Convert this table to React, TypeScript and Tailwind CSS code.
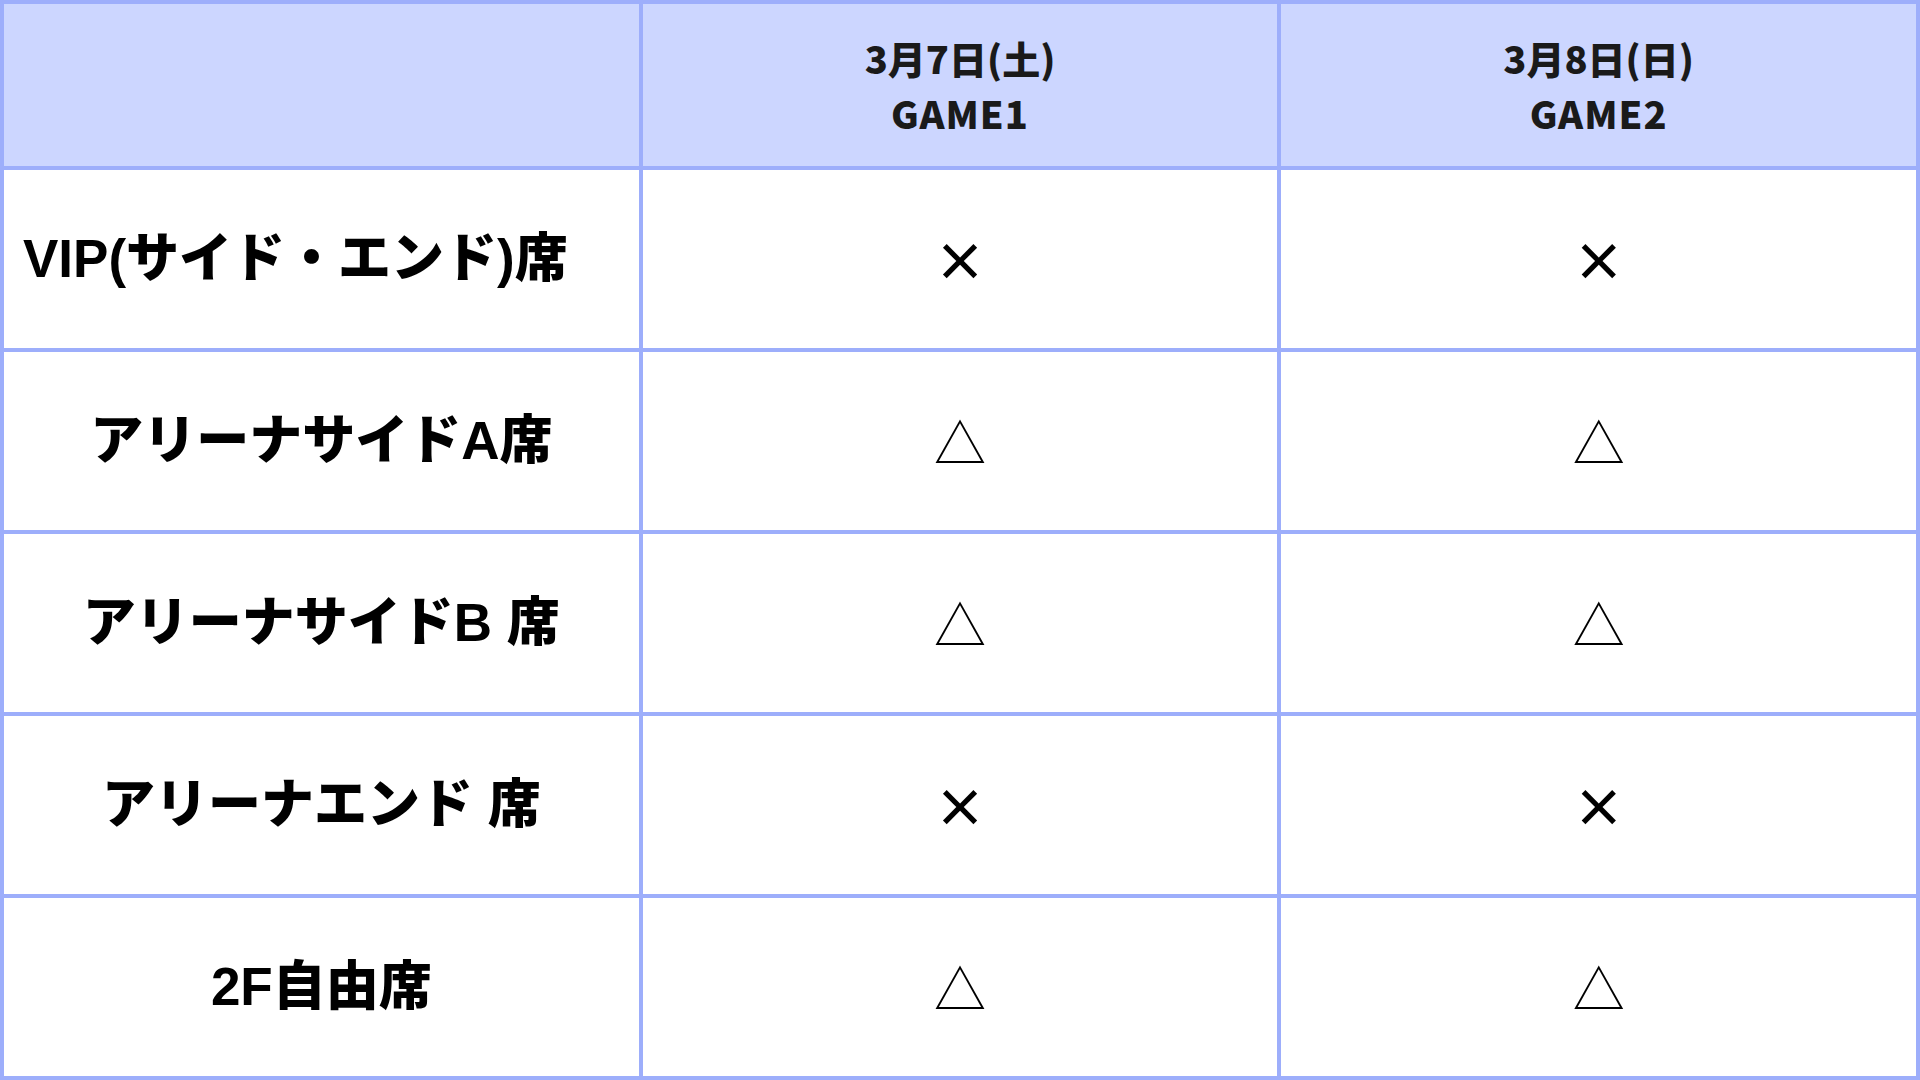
import React from "react";

const font = { fontFamily: '"Noto Sans CJK JP", "Noto Sans", sans-serif' };
const labelFont = { fontFamily: '"Liberation Sans", "Noto Sans CJK JP", sans-serif' };

function Cross() {
  return <span className="text-[52px] font-bold leading-none text-black">×</span>;
}
function Tri() {
  return <span className="text-[52px] font-normal leading-none text-black">△</span>;
}

const rows: { label: string; cls: string; a: "x" | "t" }[] = [
  { label: "VIP(サイド・エンド)席", cls: "justify-start pl-[19px] tracking-[0px]", a: "x" },
  { label: "アリーナサイドA席", cls: "justify-center", a: "t" },
  { label: "アリーナサイドB 席", cls: "justify-center", a: "t" },
  { label: "アリーナエンド 席", cls: "justify-center", a: "x" },
  { label: "2F自由席", cls: "justify-center", a: "t" },
];

export default function App() {
  return (
    <div
      className="w-[1920px] h-[1080px] bg-[#9daefb] p-[4px] grid grid-cols-3 grid-rows-[162px_repeat(5,178px)] gap-[4px]"
      style={font}
    >
      <div className="bg-[#ccd6ff]" />
      <div className="bg-[#ccd6ff] flex flex-col items-center justify-center text-[38px] leading-[55px] font-black text-[#1a1a1a]">
        <span>3月7日(土)</span>
        <span className="tracking-[1px]">GAME1</span>
      </div>
      <div className="bg-[#ccd6ff] flex flex-col items-center justify-center text-[38px] leading-[55px] font-black text-[#1a1a1a]">
        <span>3月8日(日)</span>
        <span className="tracking-[1px]">GAME2</span>
      </div>
      {rows.map((r) => (
        <React.Fragment key={r.label}>
          <div
            className={`bg-white flex items-center text-[53px] font-black text-black whitespace-nowrap ${r.cls}`}
            style={labelFont}
          >
            {r.label}
          </div>
          <div className="bg-white flex items-center justify-center">{r.a === "x" ? <Cross /> : <Tri />}</div>
          <div className="bg-white flex items-center justify-center">{r.a === "x" ? <Cross /> : <Tri />}</div>
        </React.Fragment>
      ))}
    </div>
  );
}
